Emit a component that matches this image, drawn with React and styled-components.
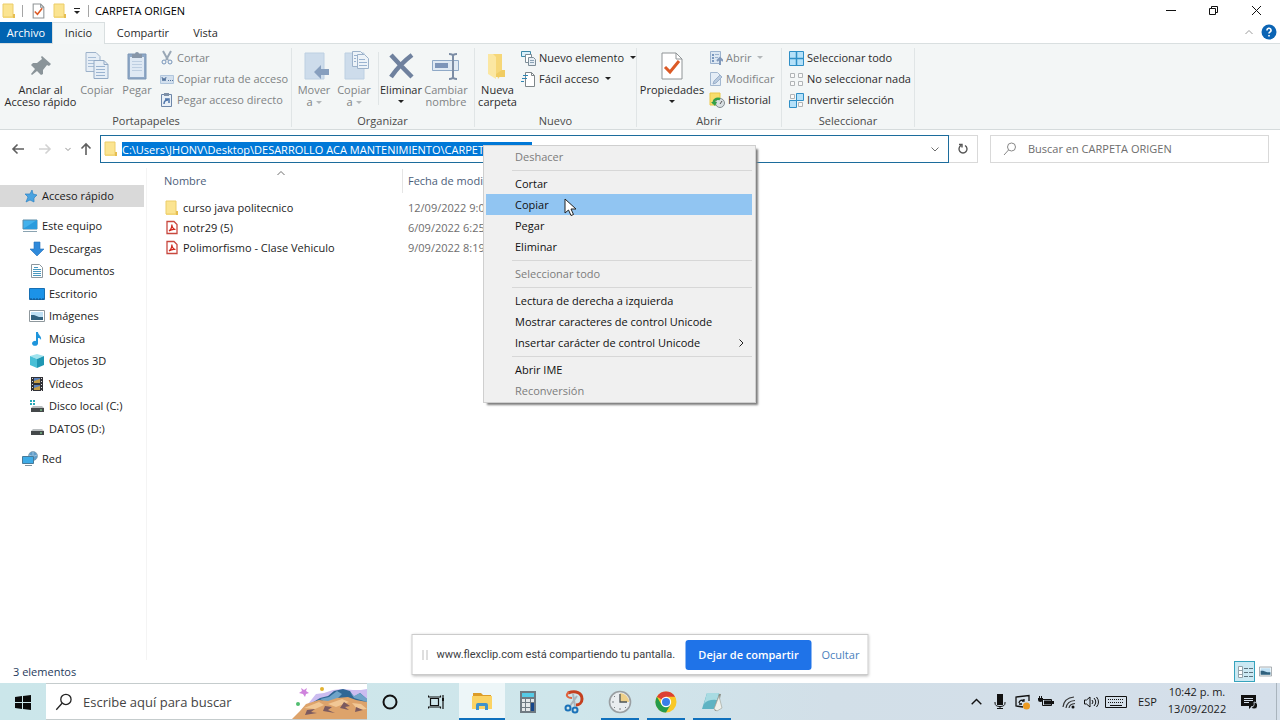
import { useState } from 'react';
import styled, { createGlobalStyle } from 'styled-components';

const GlobalStyle = createGlobalStyle`
  * {
    box-sizing: border-box;
  }

  body {
    margin: 0;
    background: #fff;
    font-family: 'Open Sans', 'Noto Sans', sans-serif;
    font-size: 11px;
    line-height: 12px;
    color: #1b1b1b;
  }

  button,
  input {
    font: inherit;
    color: inherit;
    border: 0;
    padding: 0;
    background: none;
  }

  svg {
    display: block;
    flex: none;
  }
`;

const Desktop = styled.div`
  position: relative;
  display: flex;
  flex-direction: column;
  min-height: 100vh;
  background: #fff;
`;

/* ---------- title bar ---------- */

const TitleBar = styled.header`
  display: flex;
  align-items: center;
  height: 22px;
  padding: 0 2px;
`;

const QuickButton = styled.button`
  display: flex;
  justify-content: center;
  width: ${props => props.$width || 21}px;
`;

const TitleDivider = styled.span`
  width: 1px;
  height: 12px;
  background: #a5a5a5;
`;

const WindowTitle = styled.h1`
  flex: 1;
  margin: 0 0 0 6px;
  font-size: 11px;
  font-weight: 400;
  color: #000;
`;

const WindowButton = styled.button`
  display: flex;
  align-items: center;
  justify-content: center;
  width: 43px;
  height: 20px;
`;

/* ---------- tabs ---------- */

const TabBar = styled.nav`
  display: flex;
  align-items: stretch;
  height: 22px;
  padding-right: 3px;
  border-bottom: 1px solid #d9dfe0;
`;

const Tab = styled.button`
  height: ${props => (props.$active ? 22 : 21)}px;
  width: ${props => props.$width}px;
  padding-bottom: ${props => (props.$active ? 2 : 0)}px;
  background: ${props => (props.$file ? '#0063b1' : props.$active ? '#f4f7f7' : 'transparent')};
  color: ${props => (props.$file ? '#fff' : '#2b2b2b')};
  border: solid #d9dfe0;
  border-width: ${props => (props.$active ? '1px 1px 0' : '0')};
`;

const TabTools = styled.div`
  display: flex;
  align-items: center;
  gap: 8px;
  margin-left: auto;
  height: 20px;
`;

/* ---------- ribbon ---------- */

const Ribbon = styled.section`
  display: flex;
  height: 86px;
  padding: 4px 0 2px;
  background: #f3f6f6;
  border-bottom: 1px solid #d5dbdc;
`;

const Group = styled.div`
  display: flex;
  flex-direction: column;
  width: ${props => props.$width}px;
  padding-left: ${props => props.$pad || 3}px;
  border-right: 1px solid #e0e5e6;
`;

const GroupBody = styled.div`
  display: flex;
  flex: 1;
  align-items: flex-start;
`;

const GroupCaption = styled.div`
  height: 12px;
  padding-right: 3px;
  text-align: center;
  color: #4a4a4a;
`;

const BigButton = styled.button`
  display: flex;
  flex-direction: column;
  align-items: center;
  gap: 2px;
  width: ${props => props.$width || 40}px;
  padding-top: 2px;
  white-space: pre-line;
  color: ${props => (props.disabled ? '#7f8385' : '#2b2b2b')};
`;

const Arrow = styled.span`
  display: inline-block;
  margin: ${props => (props.$below ? '2px' : '0 0 2px 3px')};
  border: solid transparent;
  border-width: 3px 3px 0;
  border-top-color: ${props => (props.$muted ? '#b3b7b9' : '#222')};
`;

const BodyDivider = styled.span`
  width: 1px;
  height: 53px;
  margin: 4px 1px 0 4px;
  background: #e0e5e6;
`;

const SmallColumn = styled.div`
  display: flex;
  flex-direction: column;
  gap: 1px;
  margin-left: ${props => props.$indent || 3}px;
`;

const SmallButton = styled.button`
  display: flex;
  align-items: center;
  gap: 3px;
  height: 20px;
  white-space: nowrap;
  color: ${props => (props.disabled ? '#7f8385' : '#2b2b2b')};
`;

/* ---------- address row ---------- */

const AddressRow = styled.div`
  display: flex;
  align-items: center;
  height: 38px;
  padding: 0 11px 0 8px;
`;

const NavButton = styled.button`
  display: flex;
  justify-content: center;
  width: ${props => props.$width}px;
`;

const AddressBox = styled.div`
  display: flex;
  flex: 1;
  align-items: center;
  height: 28px;
  margin-left: 3px;
  padding-left: 3px;
  border: 1px solid #1c6c9c;
`;

const PathInput = styled.input`
  width: 410px;
  height: 14px;
  margin-left: 4px;
  background: #0078d7;
  color: #fff;
  outline: 0;
`;

const DropButton = styled.button`
  display: flex;
  justify-content: center;
  width: 26px;
  margin-left: auto;
`;

const RefreshButton = styled.button`
  display: flex;
  align-items: center;
  justify-content: center;
  width: 29px;
  height: 28px;
  border: 1px solid #d9d9d9;
  border-left: 0;
`;

const SearchBox = styled.label`
  display: flex;
  align-items: center;
  gap: 11px;
  width: 279px;
  height: 28px;
  margin-left: 12px;
  padding-left: 12px;
  border: 1px solid #d9d9d9;

  input {
    flex: 1;
    min-width: 0;
    outline: 0;
  }

  input::placeholder {
    color: #6d6d6d;
    opacity: 1;
  }
`;

/* ---------- explorer body ---------- */

const Explorer = styled.main`
  display: flex;
  flex: 1;
`;

const Sidebar = styled.nav`
  width: 147px;
  padding-top: 17px;
  border-right: 1px solid #f4f4f4;
`;

const TreeList = styled.ul`
  display: grid;
  grid-auto-rows: 1fr;
  height: ${props => props.$height}px;
  margin: 0 2px 8px 0;
  padding: 0;
  list-style: none;
`;

const TreeLink = styled.a`
  display: flex;
  align-items: center;
  gap: 4px;
  height: 100%;
  padding-left: ${props => (props.$nested ? 29 : 22)}px;
  background: ${props => (props.$active ? '#d9d9d9' : 'transparent')};
  color: #1b1b1b;
  text-decoration: none;
  white-space: nowrap;
`;

const FilePane = styled.section`
  flex: 1;
  padding: 1px 0 0 17px;
`;

const FileTable = styled.table`
  table-layout: fixed;
  width: 400px;
  border-collapse: collapse;

  th,
  td {
    padding: 0;
    text-align: left;
    font-weight: 400;
    white-space: nowrap;
  }
`;

const HeadCell = styled.th`
  width: ${props => props.$width}px;
  height: 24px;
  color: #4c607a;
`;

const HeadInner = styled.div`
  display: flex;
  height: 24px;
  align-items: center;
  padding-left: ${props => (props.$date ? 5 : 0)}px;
  border-left: ${props => (props.$date ? '1px solid #e5e5e5' : '0')};

  svg {
    align-self: flex-start;
    margin-left: 70px;
  }
`;

const FileName = styled.div`
  display: flex;
  align-items: center;
  gap: 4px;
  height: 20px;
  padding-left: 1px;
`;

const DateCell = styled.td`
  color: #6d6d6d;

  && {
    padding-left: 6px;
  }
`;

const HeadSpace = styled.tr`
  height: 5px;
`;

const StatusBar = styled.footer`
  display: flex;
  align-items: center;
  height: 23px;
  padding: 0 4px 0 13px;
  color: #1e395b;
`;

const ViewButton = styled.button`
  display: flex;
  align-items: center;
  justify-content: center;
  width: 21px;
  height: 21px;
  margin-left: ${props => (props.$active ? 'auto' : '0')};
  border: ${props => (props.$active ? '1px solid #35a3bd' : '0')};
  background: ${props => (props.$active ? '#cbe9f3' : 'transparent')};
`;

/* ---------- context menu ---------- */

const Menu = styled.div`
  position: absolute;
  left: 483px;
  top: 145px;
  display: flex;
  flex-direction: column;
  width: 273px;
  padding: 0 3px 1px 2px;
  background: #f0f0f0;
  border: 1px solid #cfcfcf;
  box-shadow: 3px 3px 2px -1px #7d7d7d;
`;

const MenuItem = styled.button`
  display: flex;
  align-items: center;
  justify-content: space-between;
  height: 21px;
  padding: 0 7px 0 29px;
  text-align: left;
  background: ${props => (props.$hot ? '#91c5f2' : 'transparent')};
  color: ${props => (props.disabled ? '#7c7c7c' : '#111')};
`;

const MenuRule = styled.hr`
  width: 240px;
  height: 1px;
  margin: 3px 0 2px auto;
  border: 0;
  background: #d7d7d7;
`;

const Pointer = styled.svg`
  position: absolute;
  left: 564px;
  top: 198px;
`;

/* ---------- sharing notice ---------- */

const ShareNotice = styled.div`
  position: absolute;
  left: 50%;
  bottom: 45px;
  display: flex;
  align-items: center;
  width: 457px;
  height: 41px;
  padding-left: 10px;
  background: #fff;
  border: 1px solid #cbcbcb;
  box-shadow: 0 1px 3px rgba(0, 0, 0, 0.3);
  transform: translateX(-50%);
`;

const Grip = styled.span`
  width: 5px;
  height: 10px;
  margin-right: 9px;
  border: solid #bdbdbd;
  border-width: 0 1px;
`;

const ShareText = styled.span`
  width: 249px;
  font-family: Roboto, 'Open Sans', sans-serif;
  white-space: nowrap;
  color: #3c4043;
`;

const StopButton = styled.button`
  width: 126px;
  height: 30px;
  border-radius: 3px;
  background: #1f73e8;
  color: #fff;
  font-weight: 600;
`;

const HideButton = styled.button`
  margin-left: 10px;
  color: #4a80bd;
`;

/* ---------- taskbar ---------- */

const Taskbar = styled.footer`
  display: flex;
  height: 37px;
  background: linear-gradient(90deg, #cbe6ea 0%, #cfe6eb 45%, #d2dfe8 65%, #d5dfea 100%);
`;

const TaskButton = styled.button`
  display: flex;
  align-items: center;
  justify-content: center;
  width: 46px;
  background: ${props => (props.$active ? '#edf6f8' : 'transparent')};
  box-shadow: ${props => (props.$open ? 'inset 0 -2px #0f70bd' : 'none')};
`;

const AppButton = styled(TaskButton)`
  width: ${props => (props.$open && !props.$active ? 38 : 46)}px;
  margin: 0 ${props => (props.$open && !props.$active ? 4 : 0)}px;
`;

const TaskSearch = styled.label`
  display: flex;
  align-items: center;
  width: 321px;
  padding-left: 9px;
  background: #fff;
  border: 1px solid #c5cccd;
  border-width: 1px 0;

  input {
    flex: 1;
    min-width: 0;
    margin-left: 10px;
    font-size: 13px;
    line-height: 20px;
    outline: 0;
  }

  input::placeholder {
    color: #444;
    opacity: 1;
  }
`;

const Tray = styled.div`
  display: flex;
  align-items: stretch;
  margin-left: auto;
`;

const TrayButton = styled.button`
  display: flex;
  align-items: center;
  justify-content: center;
  width: ${props => props.$width || 23}px;
  font-size: 11px;
`;

const Clock = styled.time`
  display: flex;
  flex-direction: column;
  justify-content: center;
  width: 62px;
  padding-bottom: 3px;
  line-height: 17px;
  text-align: center;
`;

const ShowDesktop = styled.button`
  width: 4px;
  margin-left: 6px;
  border-left: 1px solid #a9b4bd;
`;

/* ---------- icons ---------- */

const Svg = ({ w = 16, h = 16, children, ...rest }) => (
  <svg width={w} height={h} viewBox={`0 0 ${w} ${h}`} fill="none" aria-hidden="true" {...rest}>
    {children}
  </svg>
);

const FolderIcon = () => (
  <Svg w={14}>
    <path d="M1 1h10v10h2v4H1z" fill="#f9e08a" />
    <path d="M1 1h10v13H1z" fill="#fbe491" stroke="#eccd68" />
    <path d="M11 11h2v4h-2z" fill="#e6bd50" />
  </Svg>
);

const CheckPageIcon = ({ big }) => (
  <svg width={big ? 24 : 13} height={big ? 32 : 16} viewBox="0 0 24 30" fill="none" aria-hidden="true">
    <path d="M2 2h14l6 6v20H2z" fill="#fff" stroke="#8f9496" strokeWidth={big ? 1 : 2} />
    <path d="M16 2v6h6" stroke="#8f9496" strokeWidth={big ? 1 : 2} />
    <path d="M5 16l5 5 9-11" stroke="#dc5a26" strokeWidth="3" />
  </svg>
);

const PinIcon = () => (
  <Svg w={32} h={32}>
    <path d="M17 6l9 8-2 2-2-1-4 5 0 4-2 1-4-4-5 4-1-1 4-5-4-4 2-2h4l5-4-1-2z" fill="#8a9499" />
  </Svg>
);

const PagesIcon = () => (
  <Svg w={32} h={32}>
    <path d="M5 2.500h10l4 4v15H5z" fill="#e6eef6" stroke="#9db2ca" />
    <path d="M7 7.500h8M7 10.500h8M7 13.500h8M7 16.500h8" stroke="#a7bdd6" />
    <path d="M13 10.500h10l4 4v14H13z" fill="#e6eef6" stroke="#93aac5" />
    <path d="M23 10.500v4h4" stroke="#93aac5" />
    <path d="M15 16.500h9M15 19.500h9M15 22.500h9M15 25.500h9" stroke="#9ab3d0" />
  </Svg>
);

const ClipboardIcon = () => (
  <Svg w={32} h={32}>
    <path d="M7 4h18v25H7z" fill="#8fa8c6" stroke="#7d97b7" />
    <path d="M9 7h14v20H9z" fill="#dfe9f4" />
    <path d="M11 11.500h10M11 14.500h10M11 17.500h10M11 20.500h10" stroke="#bdcee1" />
    <path d="M11 4h3a2 2 0 0 1 4 0h3v4H11z" fill="#8796a8" />
  </Svg>
);

const ScissorsIcon = () => (
  <Svg w={14}>
    <path d="M3 1l5 9M11 1L6 10" stroke="#99a7b5" strokeWidth="2" />
    <circle cx="4" cy="12" r="2" stroke="#7593b8" />
    <circle cx="10" cy="12" r="2" stroke="#7593b8" />
  </Svg>
);

const PathIcon = () => (
  <Svg w={14}>
    <path d="M.5 4.500h13v8H.5z" fill="#d3e0ee" stroke="#b1c6dd" />
    <path d="M2 6l1 4 1-3 1 3 1-4M8 9.500h1M10 9.500h1M12 9.500h1" stroke="#55749d" />
  </Svg>
);

const ShortcutIcon = () => (
  <Svg w={14}>
    <path d="M1.500 2.500h10v12h-10z" fill="#e9f0f7" stroke="#6d86a8" />
    <path d="M4 1h5v3H4z" fill="#7e90a7" />
    <path d="M4 12c0-3 1-4 4-4M5 7h4v4" stroke="#4f76ab" strokeWidth="1.500" />
  </Svg>
);

const MoveIcon = () => (
  <Svg w={32} h={32}>
    <path d="M7 3h19v26H7z" fill="#cddceb" stroke="#bdd0e2" />
    <path d="M16 22l7-7v4h8v6h-8v4z" fill="#879fbe" />
  </Svg>
);

const CopyToIcon = () => (
  <Svg w={32} h={32}>
    <path d="M7 3h19v26H7z" fill="#cddceb" stroke="#bdd0e2" />
    <path d="M14.500 1.500h8l3 3v12h-11z" fill="#edf3f8" stroke="#9db2ca" />
    <path d="M19.500 4.500h7l4 4v10h-11z" fill="#edf3f8" stroke="#9db2ca" />
    <path d="M21 9.500h6M21 12.500h8M21 15.500h8M16 5.500h3M16 8.500h2M16 11.500h2" stroke="#9ab3d0" />
  </Svg>
);

const CrossIcon = () => (
  <Svg w={32} h={32}>
    <path d="M6 5q10 11 21 22M27 5Q15 14 6 27" stroke="#6f819e" strokeWidth="4.500" />
  </Svg>
);

const RenameIcon = () => (
  <Svg w={32} h={32}>
    <path d="M2.500 10.500h26v10h-26z" fill="#dfe9f3" stroke="#8fa9c7" />
    <path d="M5 13h13v5H5z" fill="#7d95b9" />
    <path d="M19 4c3 0 4 1 4 2 0-1 1-2 4-2M23 6v21M19 29c3 0 4-1 4-2 0 1 1 2 4 2" stroke="#7c8da5" strokeWidth="2" />
  </Svg>
);

const NewFolderIcon = () => (
  <Svg w={32} h={32}>
    <path d="M6 4h14v20l-4 5-1-5H6z" fill="#f6d778" />
    <path d="M6 4h5l3 3v22l-8-5z" fill="#fbe7a2" />
    <path d="M20 20h3v7H14v-3z" fill="#f0cc62" />
  </Svg>
);

const NewItemIcon = () => (
  <Svg w={15}>
    <path d="M.5 1.500h9v5h-9z" fill="#d9f0fa" stroke="#3d89a8" />
    <path d="M4.500 4.500h6v8h-6z" fill="#fff" stroke="#7d8d97" />
    <path d="M7.500 7.500h5l2 2v6h-7z" fill="#e7eef4" stroke="#7d8d97" />
    <path d="M9 10.500h4M9 12.500h4" stroke="#8aa2b5" />
  </Svg>
);

const EasyAccessIcon = () => (
  <Svg w={15}>
    <path d="M4.500 1.500h6l3 3v11h-9z" fill="#fff" stroke="#7e868a" />
    <path d="M10.500 1.500v3h3" stroke="#7e868a" />
    <path d="M2 4.500h5M1 7.500h5M0 10.500h3" stroke="#2e86b3" />
  </Svg>
);

const OpenIcon = () => (
  <Svg w={14}>
    <path d="M1.500 1.500h10v12h-10z" fill="#dce7f2" stroke="#9cb3ce" />
    <path d="M3 4h2v2H3zM3 7h2v2H3zM3 10h2v2H3z" fill="#7896bd" />
    <path d="M6 4.500h4M6 7.500h3" stroke="#9cb3ce" />
    <path d="M11 15V9M8 11l3-3 3 3" stroke="#8199bb" strokeWidth="2" />
  </Svg>
);

const EditIcon = () => (
  <Svg w={14}>
    <path d="M1.500 1.500h7l3 3v10h-10z" fill="#e4edf6" stroke="#a3b8d0" />
    <path d="M4 13l1-3 6-6 2 2-6 6z" fill="#b9cade" stroke="#9ab0cb" />
  </Svg>
);

const HistoryIcon = () => (
  <Svg w={16}>
    <path d="M1 1h10v12H1z" fill="#f8dd6c" stroke="#eac84a" />
    <circle cx="11" cy="11" r="4.500" fill="#d9dfe2" stroke="#838c91" />
    <path d="M11 12l2-3" stroke="#555" />
    <path d="M5 12c-1-4 2-6 6-5" stroke="#33a04a" strokeWidth="2.500" />
    <path d="M2 10h6l-2 4z" fill="#33a04a" />
  </Svg>
);

const SelectAllIcon = () => (
  <Svg w={15}>
    <path d="M.5 1.500h14v14H.5z" fill="#b5e1f9" stroke="#2f8fc6" />
    <path d="M7.500 1v15M0 8.500h15" stroke="#2f8fc6" strokeWidth="1.500" />
  </Svg>
);

const SelectNoneIcon = () => (
  <Svg w={15}>
    <path d="M1.500 2.500h4v4h-4zM9.500 2.500h4v4h-4zM1.500 10.500h4v4h-4zM9.500 10.500h4v4h-4z" fill="#fafafa" stroke="#b0b4b6" />
  </Svg>
);

const SelectInvertIcon = () => (
  <Svg w={15}>
    <path d="M1.500 2.500h4v4h-4zM9.500 10.500h4v4h-4z" fill="#fafafa" stroke="#b0b4b6" />
    <path d="M7.500 1.500h7v7h-7zM.5 8.500h7v7h-7z" fill="#b5e1f9" stroke="#2f8fc6" />
  </Svg>
);

const HelpIcon = () => (
  <Svg>
    <circle cx="8" cy="8" r="7.500" fill="#0b64b4" />
    <path d="M6 6.500a2 2 0 1 1 3 1.500Q8 8.500 8 9.500M8 11v1.500" stroke="#fff" strokeWidth="1.600" />
  </Svg>
);

const ChevronIcon = ({ up, right, size = 8, color = '#6e6e6e', ...rest }) => (
  <svg width={size} height={size} viewBox="0 0 8 8" fill="none" stroke={color} aria-hidden="true" {...rest}>
    <path d={up ? 'M0.500 6L4 2.500 7.500 6' : right ? 'M2.500 0.500L6 4 2.500 7.500' : 'M0.500 2.500L4 6l3.500-3.500'} />
  </svg>
);

const ArrowIcon = ({ dir, color = '#5f5f5f' }) => (
  <Svg w={14} h={14} stroke={color} strokeWidth="1.600">
    {dir === 'left' && <path d="M2 7h11M6.500 2.500L2 7l4.500 4.500" />}
    {dir === 'right' && <path d="M1 7h11M7.500 2.500L12 7l-4.500 4.500" />}
    {dir === 'up' && <path d="M7 2v11M2.500 6.500L7 2l4.500 4.500" />}
  </Svg>
);

const RefreshIcon = () => (
  <Svg w={12} h={12} stroke="#555" strokeWidth="1.400">
    <path d="M8 2.500a4 4 0 1 1-4 0M2 1.500h3v3" />
  </Svg>
);

const LensIcon = ({ size = 14, color = '#888' }) => (
  <svg width={size} height={size} viewBox="0 0 14 14" fill="none" stroke={color} aria-hidden="true">
    <circle cx="8.500" cy="5" r="4" />
    <path d="M5.500 8L1 13" />
  </svg>
);

const PdfIcon = () => (
  <Svg w={14}>
    <path d="M2 1.500h7l3 3v9H2z" fill="#fff" stroke="#c8483f" strokeWidth="1.300" />
    <path d="M4 11c2-1.500 3-4 2.800-6.500C7 7 8 9 10.500 9.500 8 9 6 9.500 4 11z" stroke="#d0281d" strokeWidth="1.200" />
  </Svg>
);

const StarIcon = () => (
  <Svg>
    <path d="M10 2l1 4 4 1-3 3 0 4-4-2-4 2 2-5-3-3h5z" fill="#4aa3e0" stroke="#2b82c4" strokeWidth=".7" />
  </Svg>
);

const ComputerIcon = () => (
  <Svg>
    <path d="M1 2h14v9H1z" fill="#43b1ec" stroke="#5b8ca9" />
    <path d="M1 11L15 2v9z" fill="#2b9bdd" />
    <path d="M1 13.500h14" stroke="#8aa3b1" />
  </Svg>
);

const DownloadIcon = () => (
  <Svg>
    <path d="M5 1h6v7h4l-7 7-7-7h4z" fill="#2f8adb" stroke="#236fb8" strokeWidth=".6" />
  </Svg>
);

const DocumentIcon = () => (
  <Svg>
    <path d="M2.500 1.500h8l3 3v10h-11z" fill="#fff" stroke="#8c979e" />
    <path d="M5 4.500h4M4 6.500h8M4 8.500h8M4 10.500h8M4 12.500h8" stroke="#4a98bf" />
  </Svg>
);

const DesktopIcon = () => (
  <Svg>
    <path d="M.5 2.500h15v11H.5z" fill="#1c93e8" stroke="#176fb3" />
    <path d="M1 13h14" stroke="#114f86" strokeDasharray="2 1" />
  </Svg>
);

const PictureIcon = ({ small }) => (
  <svg width={small ? 13 : 16} height={small ? 13 : 16} viewBox="0 0 16 16" fill="none" aria-hidden="true">
    <path d="M.5 2.500h15v11H.5z" fill="#fff" stroke="#8f989d" />
    <path d="M2 4h12v8H2z" fill="#bfe0f4" />
    <path d="M2 7l3 0 5 2 4 0v3H2z" fill="#31617e" />
  </svg>
);

const MusicIcon = () => (
  <Svg>
    <path d="M7 1h2c0 3 4 4 3 8-1-2-2-2-3-2v5a3 2.500 0 1 1-2-2z" fill="#1e95dc" />
  </Svg>
);

const CubeIcon = () => (
  <Svg>
    <path d="M1 3l7-2 7 2-7 3z" fill="#9fe3ee" />
    <path d="M1 3l7 3v9l-7-3z" fill="#48bfd6" />
    <path d="M8 6l7-3v9l-7 3z" fill="#1f97b3" />
  </Svg>
);

const VideoIcon = () => (
  <Svg>
    <path d="M2 1h12v14H2z" fill="#303036" />
    <path d="M5 2h6v5H5zM5 9h6v5H5z" fill="#5a80bb" />
    <path d="M5 5l6-2v4H5zM5 12l6-2v4H5z" fill="#c49b45" />
    <path d="M3.500 2v13M12.500 2v13" stroke="#dadada" strokeDasharray="1 2" />
  </Svg>
);

const DriveIcon = ({ system }) => (
  <Svg>
    <path d="M4 8h9l2 2H2z" fill="#b9bdbf" />
    <path d="M2 10h13v4H2z" fill="#44484a" />
    <path d="M11 12h2" stroke="#8df0a0" />
    {system && <path d="M1 2h2v2H1zM4 2h2v2H4zM1 5h2v2H1zM4 5h2v2H4z" fill="#28a8b8" />}
  </Svg>
);

const NetworkIcon = () => (
  <Svg>
    <circle cx="11" cy="5" r="4.500" fill="#5f9cc9" stroke="#8295a0" strokeWidth=".6" />
    <path d="M7 4q4 3 8 0M11 1v8" stroke="#a9cde6" strokeWidth=".8" />
    <path d="M.5 5.500h11v7H.5z" fill="#3eabe6" stroke="#477a99" />
    <path d="M3 14.500h7" stroke="#7d929e" />
  </Svg>
);

const DetailsIcon = () => (
  <Svg>
    <path d="M1.500 2.500h4v11h-4zM1.500 6.500h4M1.500 10.500h4" fill="#fff" stroke="#93a3aa" />
    <path d="M7 4.500h4M12 4.500h4M7 8.500h4M12 8.500h4M7 12.500h4M12 12.500h4" stroke="#5c737e" />
  </Svg>
);

const WindowsIcon = () => (
  <Svg>
    <path d="M0 3l7-1v6H0zM8 2l8-1v7H8zM0 9h7v6l-7-1zM8 9h8v7l-8-1z" fill="#0b0b0b" />
  </Svg>
);

const DunesArt = () => (
  <Svg w={75} h={35}>
    <path d="M16 20l8-10 8-1 9-3 9-1 11 1 8 0 6-1v20H10z" fill="#cbbcf0" />
    <path d="M18 20l10-6 8-2 6-5 9-2 7 2 4 6 6-4 7 6v10L16 28z" fill="#2f6795" />
    <path d="M28 15l9-2 8-6 5 3-6 6-9 3zM58 8l4 4 6-3 7 6v3l-13-4z" fill="#6ea3c8" />
    <path d="M0 35l8-8 6-7 13-4 9 1 9-3 11-1 8 3 11 2v17z" fill="#dda36b" />
    <path d="M12 24l15-6 5 3-9 4zM36 20l14-5 7 3-13 5zM60 19l9 1 6 5-9 1z" fill="#f1c795" />
    <path d="M15 26l8-1-4 3 6 1-12 2zM33 22l7 1-4 3 7 3-12-2zM52 18l6 4-5 1 4 3-9-2zM64 23l7 3-8 2z" fill="#7b5a5f" />
    <path d="M9 4l3 2 3-2-1 3 3 2-3 1-1 3-2-3-4-1 3-2z" fill="#cf83dd" />
    <circle cx="30" cy="5" r="2" fill="#e2b230" />
    <circle cx="6" cy="20" r="2" fill="#51bd70" />
  </Svg>
);

const TaskViewIcon = () => (
  <Svg stroke="#111" strokeWidth="1.200">
    <path d="M2.500 4.500h8v7h-8zM.5 1.500v1.500h12V1.500M.5 14.500V13h12v1.500M15 1v14" />
    <path d="M14 4h2v3h-2z" fill="#111" stroke="none" />
  </Svg>
);

const ExplorerIcon = () => (
  <Svg w={22} h={22}>
    <path d="M2 2h8l2 2h8v4H2z" fill="#dc9c28" />
    <path d="M1 5h20v13H1z" fill="#fbd364" />
    <path d="M5 19v-5q0-2 2-2h8q2 0 2 2v5h-3v-4H8v4z" fill="#3f92cb" />
  </Svg>
);

const CalculatorIcon = () => (
  <Svg w={18} h={24}>
    <path d="M1 1h16v22H1z" fill="#6f7a82" />
    <path d="M3 3h12v4H3z" fill="#55cbe6" />
    <path d="M3 9h3v3H3zM7 9h4v3H7zM12 9h3v3h-3zM3 13h3v4H3zM7 13h4v4H7zM3 18h3v3H3zM7 18h4v3H7z" fill="#e3e7e9" />
    <path d="M12 13h3v8h-3z" fill="#16478b" />
  </Svg>
);

const SnipIcon = () => (
  <Svg w={22} h={24}>
    <path d="M5 3c8-3 14 0 14 6 0 4-3 6-6 6" stroke="#c4401f" strokeWidth="3" />
    <path d="M6 2c-4 3-2 6 3 6" stroke="#e0643f" strokeWidth="2" />
    <path d="M10 4l2 12M14 6L7 16" stroke="#aab5bb" strokeWidth="2" />
    <circle cx="5" cy="18" r="2.500" stroke="#1b72b8" strokeWidth="2" />
    <circle cx="12" cy="20" r="2.500" stroke="#1b72b8" strokeWidth="2" />
  </Svg>
);

const ClockIcon = () => (
  <Svg w={24} h={24}>
    <circle cx="12" cy="12" r="10.500" fill="#e9edef" stroke="#9a9fa2" strokeWidth="1.600" />
    <path d="M12 12V3a9 9 0 0 1 9 9z" fill="#eed08a" />
    <path d="M12 4v8h7" stroke="#4e5558" strokeWidth="1.300" />
    <path d="M4 12h2M12 18v2M6 6l1 1M6 18l1-1M18 18l-1-1" stroke="#7a8286" />
  </Svg>
);

const ChromeIcon = () => (
  <Svg w={22} h={22}>
    <circle cx="11" cy="11" r="10.500" fill="#f9c827" />
    <path d="M11 11L1.900 5.750A10.500 10.500 0 0 1 20.100 5.750H11z" fill="#dd4033" />
    <path d="M1.900 5.750A10.500 10.500 0 0 0 11 21.500l4.600-8L6.400 13.600z" fill="#259b4b" />
    <circle cx="11" cy="11" r="5.200" fill="#fff" />
    <circle cx="11" cy="11" r="4" fill="#3a7ee8" />
  </Svg>
);

const NotesIcon = () => (
  <Svg w={24} h={22}>
    <path d="M8 2l13 1-4 17-2 0z" fill="#8a8f86" />
    <path d="M7 2h12l-5 16H2z" fill="#5fb3c3" />
    <path d="M7 2h12l-2 7Q8 8 4 13z" fill="#a8dbe2" />
    <path d="M19 5l3 12-5 3-3-2z" fill="#f0f1ec" stroke="#a4a79f" strokeWidth=".7" />
  </Svg>
);

const MicIcon = () => (
  <Svg w={12}>
    <path d="M3 0h6v11H3z" fill="#111" />
    <path d="M1 8v1q0 3.500 5 3.500T11 9V8M6 12v3M3 14.500h6" stroke="#111" />
  </Svg>
);

const UpdateIcon = () => (
  <Svg w={17}>
    <path d="M15 7V1.500L2 3v9l7 1" stroke="#111" strokeWidth="1.300" />
    <path d="M5 9a3 3 0 0 1 5-2M10 5v2H8M5 10h3" stroke="#111" strokeWidth="1.300" />
    <circle cx="12.500" cy="12" r="3.500" fill="#eb9a22" />
  </Svg>
);

const BatteryIcon = () => (
  <Svg>
    <path d="M4.500 5.500h9v6h-9z" stroke="#111" />
    <path d="M6 6.500h7v4H6zM14 7h2v3h-2z" fill="#111" />
    <path d="M0 4h5v2q0 2-2.500 2T0 6zM1 2h1v2H1zM3 2h1v2H3z" fill="#111" />
  </Svg>
);

const WifiIcon = () => (
  <Svg w={14} stroke="#333" strokeWidth="1.200">
    <path d="M1 13Q2 4 12 3M4 14Q5 7 13 6.500M7 14q.5-4 6-4.500" />
    <circle cx="11" cy="13" r="1.500" fill="#111" stroke="none" />
  </Svg>
);

const VolumeIcon = () => (
  <Svg w={17} stroke="#111">
    <path d="M1.500 6h2L7 3v10l-3.500-3h-2zM9 6q2 2 0 4M11 4q3.500 4 0 8M13.500 3q4 5 0 10" />
  </Svg>
);

const KeyboardIcon = () => (
  <Svg w={22} h={14} stroke="#111">
    <path d="M.5 1.500h21v11H.5z" />
    <path d="M3 4.500h16M3 7.500h16" strokeDasharray="1 1" />
    <path d="M5 10.500h12" />
  </Svg>
);

const NoticeIcon = () => (
  <Svg>
    <path d="M0 1h15v11h-4l-3 3v-3H0z" fill="#111" />
    <path d="M3 4.500h9M3 6.500h9M3 8.500h5" stroke="#d5dfea" />
    <path d="M13 8a3.500 3.500 0 1 1-3 5q4 0 3-5z" fill="#111" stroke="#d5dfea" strokeWidth=".8" />
  </Svg>
);

/* ---------- data ---------- */

const treeItems = [
  { label: 'Este equipo', icon: <ComputerIcon /> },
  { label: 'Descargas', icon: <DownloadIcon />, nested: true },
  { label: 'Documentos', icon: <DocumentIcon />, nested: true },
  { label: 'Escritorio', icon: <DesktopIcon />, nested: true },
  { label: 'Imágenes', icon: <PictureIcon />, nested: true },
  { label: 'Música', icon: <MusicIcon />, nested: true },
  { label: 'Objetos 3D', icon: <CubeIcon />, nested: true },
  { label: 'Vídeos', icon: <VideoIcon />, nested: true },
  { label: 'Disco local (C:)', icon: <DriveIcon system />, nested: true },
  { label: 'DATOS (D:)', icon: <DriveIcon />, nested: true },
];

const files = [
  { name: 'curso java politecnico', date: '12/09/2022 9:08', icon: <FolderIcon /> },
  { name: 'notr29 (5)', date: '6/09/2022 6:25', icon: <PdfIcon /> },
  { name: 'Polimorfismo - Clase Vehiculo', date: '9/09/2022 8:19', icon: <PdfIcon /> },
];

const menuGroups = [
  [{ label: 'Deshacer', disabled: true }],
  [{ label: 'Cortar' }, { label: 'Copiar' }, { label: 'Pegar' }, { label: 'Eliminar' }],
  [{ label: 'Seleccionar todo', disabled: true }],
  [
    { label: 'Lectura de derecha a izquierda' },
    { label: 'Mostrar caracteres de control Unicode' },
    { label: 'Insertar carácter de control Unicode', submenu: true },
  ],
  [{ label: 'Abrir IME' }, { label: 'Reconversión', disabled: true }],
];

function TreeItem({ item, active }) {
  return (
    <li>
      <TreeLink href="#" $nested={item.nested} $active={active}>
        {item.icon}
        {item.label}
      </TreeLink>
    </li>
  );
}

function RibbonBar() {
  return (
    <Ribbon>
      <Group $width={292} $pad={4}>
        <GroupBody>
          <BigButton $width={73}><PinIcon />{'Anclar al\nAcceso rápido'}</BigButton>
          <BigButton disabled><PagesIcon />Copiar</BigButton>
          <BigButton disabled><ClipboardIcon />Pegar</BigButton>
          <SmallColumn>
            <SmallButton disabled><ScissorsIcon />Cortar</SmallButton>
            <SmallButton disabled><PathIcon />Copiar ruta de acceso</SmallButton>
            <SmallButton disabled><ShortcutIcon />Pegar acceso directo</SmallButton>
          </SmallColumn>
        </GroupBody>
        <GroupCaption>Portapapeles</GroupCaption>
      </Group>

      <Group $width={183} $pad={2}>
        <GroupBody>
          <BigButton disabled><MoveIcon /><span>{'Mover\na'}<Arrow $muted /></span></BigButton>
          <BigButton disabled><CopyToIcon /><span>{'Copiar\na'}<Arrow $muted /></span></BigButton>
          <BodyDivider />
          <BigButton $width={42}><CrossIcon />Eliminar<Arrow $below /></BigButton>
          <BigButton $width={48} disabled><RenameIcon />{'Cambiar\nnombre'}</BigButton>
        </GroupBody>
        <GroupCaption>Organizar</GroupCaption>
      </Group>

      <Group $width={162}>
        <GroupBody>
          <BigButton><NewFolderIcon />{'Nueva\ncarpeta'}</BigButton>
          <SmallColumn $indent={4}>
            <SmallButton><NewItemIcon />Nuevo elemento<Arrow /></SmallButton>
            <SmallButton><EasyAccessIcon />Fácil acceso<Arrow /></SmallButton>
          </SmallColumn>
        </GroupBody>
        <GroupCaption>Nuevo</GroupCaption>
      </Group>

      <Group $width={145}>
        <GroupBody>
          <BigButton $width={64}><CheckPageIcon big />Propiedades<Arrow $below /></BigButton>
          <SmallColumn $indent={5}>
            <SmallButton disabled><OpenIcon />Abrir<Arrow $muted /></SmallButton>
            <SmallButton disabled><EditIcon />Modificar</SmallButton>
            <SmallButton><HistoryIcon />Historial</SmallButton>
          </SmallColumn>
        </GroupBody>
        <GroupCaption>Abrir</GroupCaption>
      </Group>

      <Group $width={133}>
        <GroupBody>
          <SmallColumn $indent={4}>
            <SmallButton><SelectAllIcon />Seleccionar todo</SmallButton>
            <SmallButton><SelectNoneIcon />No seleccionar nada</SmallButton>
            <SmallButton><SelectInvertIcon />Invertir selección</SmallButton>
          </SmallColumn>
        </GroupBody>
        <GroupCaption>Seleccionar</GroupCaption>
      </Group>
    </Ribbon>
  );
}

export default function App() {
  const [path, setPath] = useState(
    'C:\\Users\\JHONV\\Desktop\\DESARROLLO ACA MANTENIMIENTO\\CARPETA ORIGEN'
  );
  const [hotItem, setHotItem] = useState('Copiar');

  return (
    <Desktop>
      <GlobalStyle />

      <TitleBar>
        <QuickButton $width={14} aria-label="Carpeta"><FolderIcon /></QuickButton>
        <QuickButton as="span" $width={12}><TitleDivider /></QuickButton>
        <QuickButton aria-label="Propiedades"><CheckPageIcon /></QuickButton>
        <QuickButton aria-label="Nueva carpeta"><FolderIcon /></QuickButton>
        <QuickButton $width={14} aria-label="Personalizar">
          <Svg w={8} h={8}><path d="M1 1.500h6" stroke="#222" /><path d="M1 4h6L4 7z" fill="#222" /></Svg>
        </QuickButton>
        <QuickButton as="span" $width={4} />
        <TitleDivider />
        <WindowTitle>CARPETA ORIGEN</WindowTitle>
        <WindowButton aria-label="Minimizar"><Svg w={10} h={10}><path d="M0 4.500h10" stroke="#111" /></Svg></WindowButton>
        <WindowButton aria-label="Restaurar">
          <Svg w={10} h={10}><path d="M.5 2.500h6v6h-6zM2.500 2V.5h6v6H7" stroke="#111" /></Svg>
        </WindowButton>
        <WindowButton aria-label="Cerrar"><Svg w={10} h={10}><path d="M0 0l9 9M9 0L0 9" stroke="#111" /></Svg></WindowButton>
      </TitleBar>

      <TabBar>
        <Tab $file $width={52}>Archivo</Tab>
        <Tab $active $width={53}>Inicio</Tab>
        <Tab $width={76}>Compartir</Tab>
        <Tab $width={49}>Vista</Tab>
        <TabTools>
          <ChevronIcon up color="#9a9a9a" />
          <HelpIcon />
        </TabTools>
      </TabBar>

      <RibbonBar />

      <AddressRow>
        <NavButton $width={20} aria-label="Atrás"><ArrowIcon dir="left" /></NavButton>
        <NavButton $width={34} aria-label="Adelante"><ArrowIcon dir="right" color="#d2d2d2" /></NavButton>
        <NavButton $width={12} aria-label="Recientes"><ChevronIcon size={6} /></NavButton>
        <NavButton $width={23} aria-label="Subir"><ArrowIcon dir="up" /></NavButton>
        <AddressBox>
          <FolderIcon />
          <PathInput aria-label="Dirección" value={path} onChange={e => setPath(e.target.value)} />
          <DropButton aria-label="Ubicaciones anteriores"><ChevronIcon /></DropButton>
        </AddressBox>
        <RefreshButton aria-label="Actualizar"><RefreshIcon /></RefreshButton>
        <SearchBox>
          <LensIcon />
          <input type="text" placeholder="Buscar en CARPETA ORIGEN" aria-label="Buscar en CARPETA ORIGEN" />
        </SearchBox>
      </AddressRow>

      <Explorer>
        <Sidebar>
          <TreeList $height={22}>
            <TreeItem item={{ label: 'Acceso rápido', icon: <StarIcon /> }} active />
          </TreeList>
          <TreeList $height={225}>
            {treeItems.map(item => <TreeItem key={item.label} item={item} />)}
          </TreeList>
          <TreeList $height={22}>
            <TreeItem item={{ label: 'Red', icon: <NetworkIcon /> }} />
          </TreeList>
        </Sidebar>

        <FilePane>
          <FileTable>
            <thead>
              <tr>
                <HeadCell $width={238}>
                  <HeadInner>Nombre<ChevronIcon up /></HeadInner>
                </HeadCell>
                <HeadCell><HeadInner $date>Fecha de modificación</HeadInner></HeadCell>
              </tr>
            </thead>
            <tbody>
              <HeadSpace />
              {files.map(file => (
                <tr key={file.name}>
                  <td><FileName>{file.icon}{file.name}</FileName></td>
                  <DateCell>{file.date}</DateCell>
                </tr>
              ))}
            </tbody>
          </FileTable>
        </FilePane>
      </Explorer>

      <StatusBar>
        3 elementos
        <ViewButton $active aria-label="Detalles"><DetailsIcon /></ViewButton>
        <ViewButton aria-label="Iconos grandes"><PictureIcon small /></ViewButton>
      </StatusBar>

      <Taskbar>
        <TaskButton aria-label="Inicio"><WindowsIcon /></TaskButton>
        <TaskSearch>
          <LensIcon size={18} color="#222" />
          <input type="text" placeholder="Escribe aquí para buscar" aria-label="Escribe aquí para buscar" />
          <DunesArt />
        </TaskSearch>
        <TaskButton aria-label="Cortana">
          <Svg><circle cx="8" cy="8" r="6.500" stroke="#111" strokeWidth="2" /></Svg>
        </TaskButton>
        <TaskButton aria-label="Vista de tareas"><TaskViewIcon /></TaskButton>
        <AppButton $active $open aria-label="Explorador de archivos"><ExplorerIcon /></AppButton>
        <AppButton aria-label="Calculadora"><CalculatorIcon /></AppButton>
        <AppButton aria-label="Recortes"><SnipIcon /></AppButton>
        <AppButton $open aria-label="Reloj"><ClockIcon /></AppButton>
        <AppButton $open aria-label="Chrome"><ChromeIcon /></AppButton>
        <AppButton $open aria-label="Bloc de notas"><NotesIcon /></AppButton>
        <Tray>
          <TrayButton aria-label="Iconos ocultos"><ChevronIcon up size={11} color="#111" /></TrayButton>
          <TrayButton aria-label="Micrófono"><MicIcon /></TrayButton>
          <TrayButton aria-label="Actualizaciones"><UpdateIcon /></TrayButton>
          <TrayButton aria-label="Batería"><BatteryIcon /></TrayButton>
          <TrayButton aria-label="Red"><WifiIcon /></TrayButton>
          <TrayButton aria-label="Volumen"><VolumeIcon /></TrayButton>
          <TrayButton $width={26} aria-label="Teclado"><KeyboardIcon /></TrayButton>
          <TrayButton $width={37}>ESP</TrayButton>
          <Clock><span>10:42 p. m.</span><span>13/09/2022</span></Clock>
          <TrayButton $width={42} aria-label="Notificaciones"><NoticeIcon /></TrayButton>
          <ShowDesktop aria-label="Mostrar escritorio" />
        </Tray>
      </Taskbar>

      <ShareNotice>
        <Grip />
        <ShareText>www.flexclip.com está compartiendo tu pantalla.</ShareText>
        <StopButton>Dejar de compartir</StopButton>
        <HideButton>Ocultar</HideButton>
      </ShareNotice>

      <Menu role="menu">
        {menuGroups.map((group, i) => [
          i > 0 && <MenuRule key={`rule-${i}`} />,
          ...group.map(item => (
            <MenuItem
              key={item.label}
              role="menuitem"
              disabled={item.disabled}
              $hot={hotItem === item.label}
              onMouseEnter={() => setHotItem(item.label)}
            >
              {item.label}
              {item.submenu && <ChevronIcon right color="#222" />}
            </MenuItem>
          )),
        ])}
      </Menu>

      <Pointer width="13" height="19" viewBox="0 0 13 19" aria-hidden="true">
        <path d="M1 1v14l3.500-3 2.500 5.500 2.500-1L7 11h5z" fill="#fff" stroke="#222" />
      </Pointer>
    </Desktop>
  );
}
